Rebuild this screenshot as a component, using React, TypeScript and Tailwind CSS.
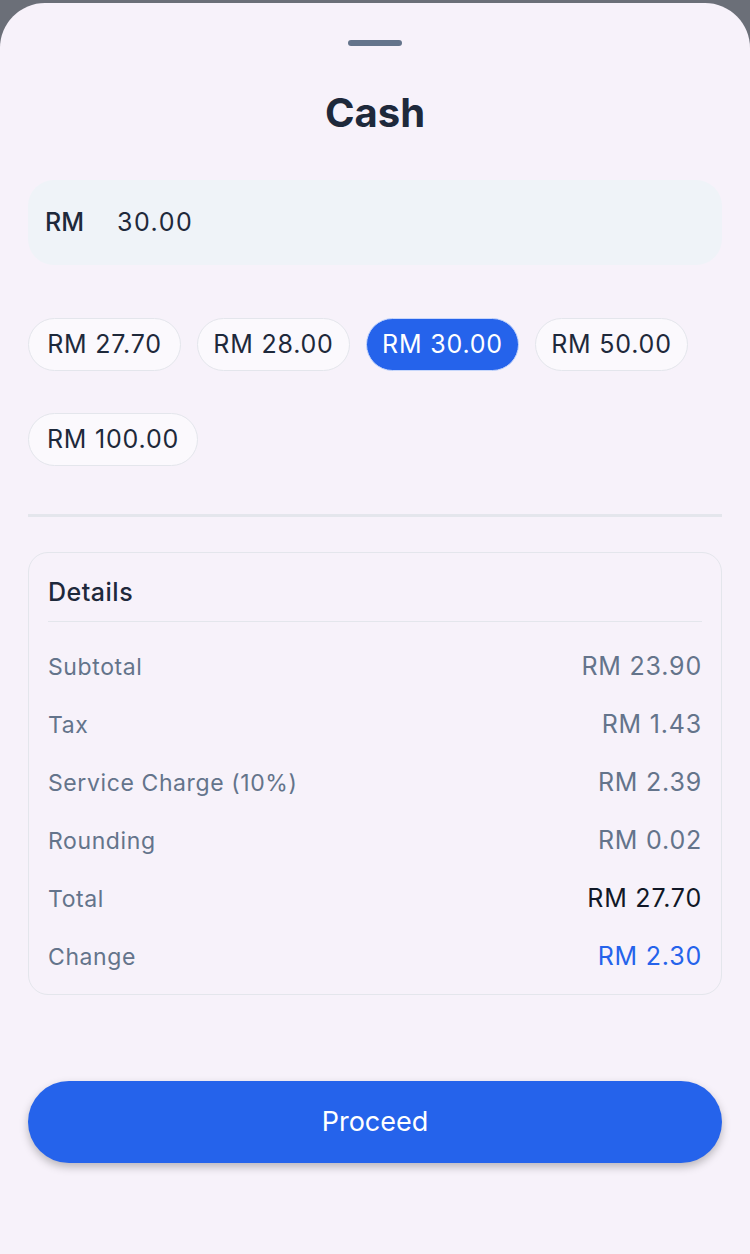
import React from "react";

const chips = [
  { label: "RM 27.70", active: false, w: "w-[153px]" },
  { label: "RM 28.00", active: false, w: "w-[153px]" },
  { label: "RM 30.00", active: true, w: "w-[153px]" },
  { label: "RM 50.00", active: false, w: "w-[153px]" },
  { label: "RM 100.00", active: false, w: "w-[170px]" },
];

const rows = [
  { label: "Subtotal", value: "RM 23.90", cls: "text-[#64748b]" },
  { label: "Tax", value: "RM 1.43", cls: "text-[#64748b]" },
  { label: "Service Charge (10%)", value: "RM 2.39", cls: "text-[#64748b]" },
  { label: "Rounding", value: "RM 0.02", cls: "text-[#64748b]" },
  { label: "Total", value: "RM 27.70", cls: "text-[#111827]" },
  { label: "Change", value: "RM 2.30", cls: "text-[#2563eb]" },
];

export default function App() {
  return (
    <div
      className="min-h-[1254px] w-[750px] bg-[#6b6f78] pt-[3px]"
      style={{ fontFamily: "Inter, 'Noto Sans', sans-serif" }}
    >
      <div className="h-[1251px] rounded-t-[45px] bg-[#f7f2fa] px-[28px]">
        <div className="flex justify-center pt-[37px]">
          <div className="h-[6px] w-[54px] rounded-full bg-[#64748b]" />
        </div>
        <h1 className="mt-[43px] text-center text-[40px] font-bold leading-[48px] text-[#1e293b]">
          Cash
        </h1>
        <div className="mt-[43px] flex h-[85px] items-center rounded-[26px] bg-[#eff3f8] px-[17px] text-[25px] text-[#1e293b]">
          <span className="font-medium">RM</span>
          <span className="ml-[33px] tracking-[1.5px]">30.00</span>
        </div>
        <div className="mt-[53px] flex flex-wrap gap-x-[16px] gap-y-[42px]">
          {chips.map((c) => (
            <div
              key={c.label}
              className={
                c.active
                  ? `flex h-[53px] ${c.w} items-center justify-center rounded-full border-[1.5px] border-[#c7d7fb] bg-[#2563eb] text-[25px] tracking-[0.8px] text-white`
                  : `flex h-[53px] ${c.w} items-center justify-center rounded-full border-[1.5px] border-[#e4e6ec] bg-[#fbf9fd] text-[25px] tracking-[0.8px] text-[#1e293b]`
              }
            >
              {c.label}
            </div>
          ))}
        </div>
        <div className="mt-[48px] h-[3px] bg-[#e4e6ec]" />
        <div className="mt-[35px] rounded-[20px] border-[1.5px] border-[#e4e6ec] px-[19px] pb-[8px]">
          <div className="flex h-[69px] items-center border-b-[1.5px] border-[#e4e6ec] pt-[11px] text-[25px] font-medium tracking-[0.5px] text-[#1e293b]">
            Details
          </div>
          <div className="pt-[16px]">
            {rows.map((r) => (
              <div key={r.label} className="flex h-[58px] items-center justify-between">
                <span className="text-[23px] tracking-[0.6px] text-[#64748b]">{r.label}</span>
                <span className={`text-[25px] tracking-[0.8px] ${r.cls}`}>{r.value}</span>
              </div>
            ))}
          </div>
        </div>
        <button className="mt-[86px] flex h-[82px] w-full items-center justify-center rounded-full bg-[#2563eb] text-[27px] text-white shadow-[0_4px_8px_rgba(0,0,0,0.25)]">
          Proceed
        </button>
      </div>
    </div>
  );
}
